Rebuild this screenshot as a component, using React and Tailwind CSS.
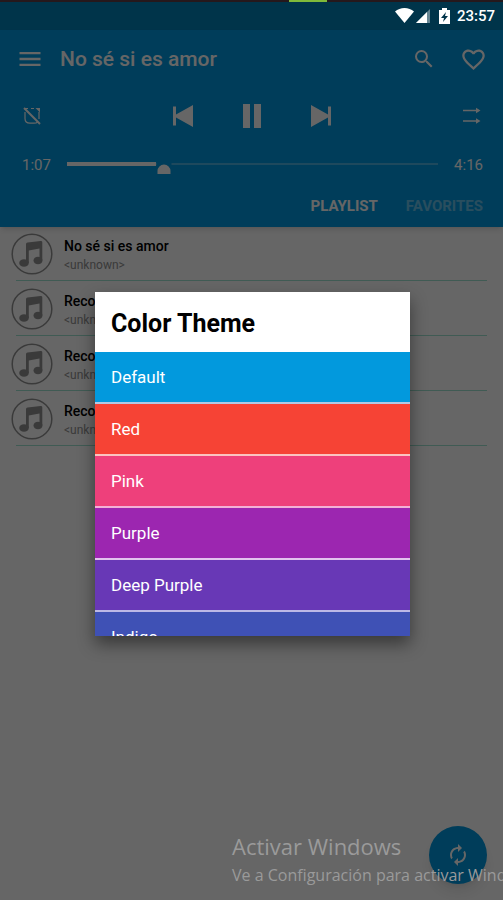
import { MdAutorenew, MdFavoriteBorder, MdMenu, MdSearch } from "react-icons/md";

const themes = [
  { name: "Default", bg: "bg-[#0299dd]", line: "border-[#b3c8e4]" },
  { name: "Red", bg: "bg-[#f64335]", line: "border-[#fbc3c0]" },
  { name: "Pink", bg: "bg-[#ee407b]", line: "border-[#f3b0d6]" },
  { name: "Purple", bg: "bg-[#9c26b0]", line: "border-[#e2c3ee]" },
  { name: "Deep Purple", bg: "bg-[#6838b6]", line: "border-[#bcb8e6]" },
  { name: "Indigo", bg: "bg-[#3f51b5]", line: "border-[#bcc4e6]" },
];

const songs = [
  { title: "No sé si es amor", artist: "<unknown>" },
  { title: "Recording 1", artist: "<unknown>" },
  { title: "Recording 2", artist: "<unknown>" },
  { title: "Recording 3", artist: "<unknown>" },
];

function RepeatOffIcon() {
  return (
    <svg viewBox="0 0 20 20" className="size-5" fill="none" stroke="currentColor" strokeWidth="1.2">
      <path d="M6 2.500H3M3 6v6.500c0 3 2 4.700 5 4.700h4c1.500 0 2.800-.5 3.600-1.400" />
      <path d="M9 2.500h3M17 6v7" />
      <path d="M13.500 2h4.500v4.500z" fill="currentColor" stroke="none" />
      <path d="M2 2l16 16" strokeWidth="2" />
    </svg>
  );
}

function OrderIcon() {
  return (
    <svg viewBox="0 0 20 20" className="size-5" fill="none" stroke="currentColor" strokeWidth="1.5">
      <path d="M2 4.500h15M2 15h15" />
      <path d="M15 1.800l4.500 2.700-4.500 2.700zM15 12.300l4.500 2.700-4.500 2.700z" fill="currentColor" stroke="none" />
    </svg>
  );
}

function PreviousIcon() {
  return (
    <svg viewBox="0 0 20 22" className="h-[22px] w-5" fill="currentColor">
      <path d="M0 1.500h3v8L20 0v22L3 12.500v8H0z" />
    </svg>
  );
}

function PauseIcon() {
  return (
    <svg viewBox="0 0 18 24" className="h-6 w-[18px]" fill="currentColor">
      <path d="M0 0h7v24H0zM11 0h7v24h-7z" />
    </svg>
  );
}

function NextIcon() {
  return (
    <svg viewBox="0 0 20 22" className="h-[22px] w-5" fill="currentColor">
      <path d="M20 1.500h-3v8L0 0v22l17-9.500v8h3z" />
    </svg>
  );
}

function NoteIcon() {
  return (
    <svg viewBox="0 0 42 42" className="size-[42px] shrink-0 text-[#929292]">
      <circle cx="21" cy="21" r="19.800" fill="none" stroke="currentColor" strokeWidth="1.500" />
      <g fill="currentColor">
        <path d="M15 11.200c0-1 .6-1.600 1.600-1.800L29.500 8c1.200-.1 1.800.4 1.800 1.500V27H28.500V15.500L17.800 17.500V30H15z" />
        <ellipse cx="13" cy="30" rx="4.800" ry="3.800" />
        <ellipse cx="27" cy="27.500" rx="4.500" ry="3.800" />
      </g>
    </svg>
  );
}

function StatusIcons() {
  return (
    <svg viewBox="0 0 56 18" className="h-[18px] w-14" fill="currentColor">
      <path d="M0 4.500C5-.2 14-.2 19 4.500L9.500 16z" />
      <path d="M35 2v14H21z" opacity="0.4" />
      <path d="M32 5v11H21z" />
      <path d="M47 1h5v2h3v14H44V3h3z" />
      <path d="M51 5l-5 6h3l-1 4 5-6h-3z" fill="#00344a" />
    </svg>
  );
}

function Player() {
  return (
    <header className="bg-[#0099e0] text-white shadow-md">
      <div className="flex h-[58px] items-center px-4">
        <button aria-label="Menu">
          <MdMenu className="size-7" />
        </button>
        <h1 className="ml-4 flex-1 pt-0.5 text-[21px] font-medium">No sé si es amor</h1>
        <button aria-label="Search">
          <MdSearch className="size-6" />
        </button>
        <button aria-label="Add to favorites" className="ml-6">
          <MdFavoriteBorder className="size-[27px]" />
        </button>
      </div>

      <div className="flex h-14 items-center justify-between px-[22px]">
        <button aria-label="Repeat">
          <RepeatOffIcon />
        </button>
        <div className="flex items-center gap-[50px]">
          <button aria-label="Previous">
            <PreviousIcon />
          </button>
          <button aria-label="Pause">
            <PauseIcon />
          </button>
          <button aria-label="Next">
            <NextIcon />
          </button>
        </div>
        <button aria-label="Play order">
          <OrderIcon />
        </button>
      </div>

      <div className="flex h-[42px] items-center justify-between pr-5 pl-[22px] text-[15px]">
        <span>1:07</span>
        <div className="relative mx-4 h-5 flex-1">
          <input
            type="range"
            aria-label="Position"
            min="0"
            max="256"
            defaultValue="67"
            className="absolute inset-0 w-full opacity-0"
          />
          <svg className="pointer-events-none h-5 w-full" fill="currentColor">
            <rect x="0" y="8" width="100%" height="2" opacity="0.3" />
            <rect x="0" y="7" width="24%" height="4" />
            <svg x="26%" y="0" overflow="visible">
              <path d="M-7 5H8v7H-7z" fill="#0099e0" />
              <path d="M-6 19v-3a6 6 0 0 1 13 0v3z" />
            </svg>
          </svg>
        </div>
        <span>4:16</span>
      </div>

      <nav className="flex h-[41px] items-center justify-end gap-7 px-5 text-[15px] font-bold">
        <button>PLAYLIST</button>
        <button className="opacity-40">FAVORITES</button>
      </nav>
    </header>
  );
}

function SongList() {
  return (
    <ul className="text-black">
      {songs.map((song) => (
        <li key={song.title}>
          <div className="flex h-[53px] items-center gap-[11px] pl-[11px]">
            <NoteIcon />
            <div className="pt-0.5">
              <p className="text-sm leading-5 font-medium">{song.title}</p>
              <p className="text-xs leading-[18px] text-[#929292]">{song.artist}</p>
            </div>
          </div>
          <hr className="mx-4 mb-px border-[#a0e4d2]" />
        </li>
      ))}
    </ul>
  );
}

function ThemeDialog() {
  return (
    <div className="absolute inset-0 flex items-center justify-center bg-black/60 pt-7 pr-[93px] pl-[95px]">
      <div role="dialog" aria-labelledby="theme-title" className="w-full bg-white shadow-[0_8px_16px_rgba(0,0,0,0.45)]">
        <h2 id="theme-title" className="flex h-[60px] items-center px-4 pt-1 text-[25px] font-bold text-black">
          Color Theme
        </h2>
        <div className="max-h-[284px] overflow-hidden">
          {themes.map((theme) => (
            <button
              key={theme.name}
              className={`block h-[52px] w-full border-b-2 px-4 pt-0.5 text-left text-[17px] text-white ${theme.bg} ${theme.line}`}
            >
              {theme.name}
            </button>
          ))}
        </div>
      </div>
    </div>
  );
}

export default function App() {
  return (
    <div className="relative flex min-h-screen flex-col overflow-hidden bg-white font-[Roboto,sans-serif]">
      <div className="h-[30px] bg-[#0082b9]" />
      <Player />
      <SongList />
      <button
        aria-label="Refresh"
        className="mt-auto mr-4 mb-4 flex size-[58px] items-center justify-center self-end rounded-full bg-[#0099e0] text-white shadow-lg"
      >
        <MdAutorenew className="size-6" />
      </button>

      <ThemeDialog />

      {/* Status bar stays bright above the dialog scrim */}
      <div className="absolute inset-x-0 top-0 text-white">
        <div className="flex h-0.5 justify-center bg-[#25181c]">
          <span className="ml-28 w-[38px] bg-[#7fb93a]" />
        </div>
        <div className="flex h-7 items-center justify-end gap-1.5 pr-2 text-[15px] font-medium">
          <StatusIcons />
          <span>23:57</span>
        </div>
      </div>

      <div className="pointer-events-none absolute bottom-3 left-[232px] font-['Open_Sans',sans-serif] whitespace-nowrap text-[#9a9a9a]">
        <p className="text-[22px] leading-8">Activar Windows</p>
        <p className="text-base leading-[26px]">Ve a Configuración para activar Windows</p>
      </div>
    </div>
  );
}
